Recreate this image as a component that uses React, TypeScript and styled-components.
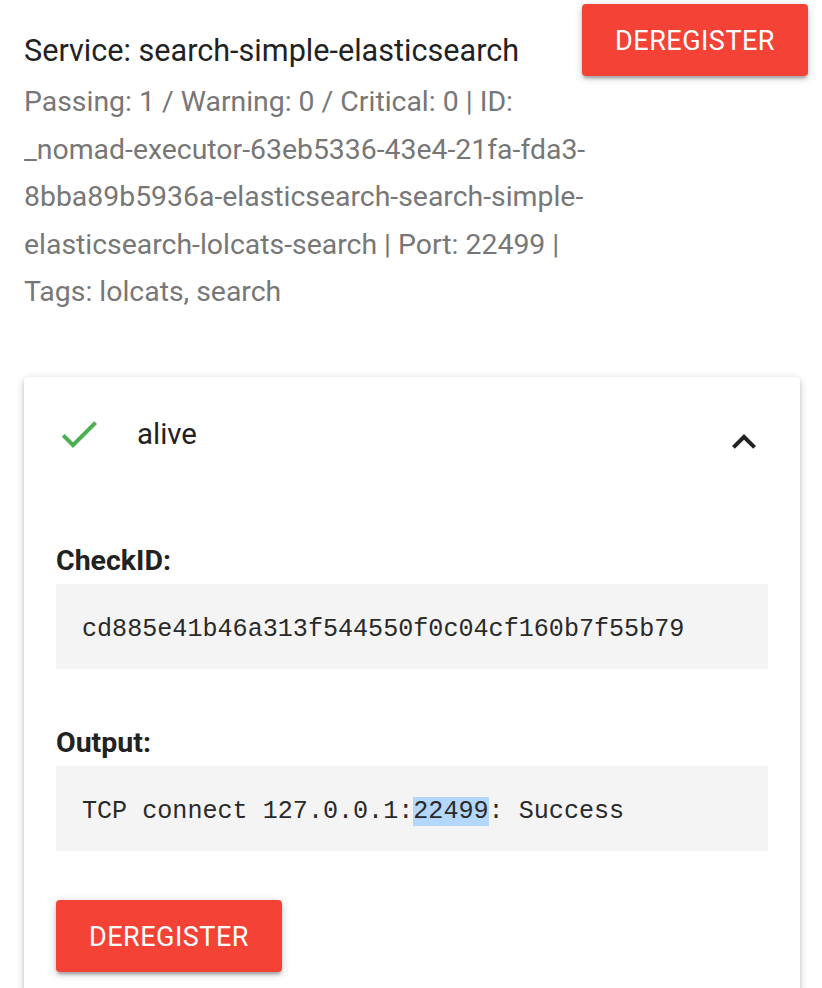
import React from 'react';
import styled, { createGlobalStyle } from 'styled-components';

const GlobalStyle = createGlobalStyle`
  body {
    margin: 0;
    background: #ffffff;
    font-family: Roboto, "Liberation Sans", sans-serif;
    color: rgba(0, 0, 0, 0.87);
  }
`;

const Page = styled.div`
  padding: 4px 14px 0 24px;
`;

const Header = styled.div`
  display: grid;
  grid-template-columns: 1fr auto;
  align-items: start;
`;

const Title = styled.h5`
  margin: 22.5px 0 0 0;
  font-size: 30.6px;
  font-weight: 400;
  line-height: 48px;
  color: #222222;
`;

const Meta = styled.p`
  grid-column: 1 / span 2;
  max-width: 600px;
  margin: 2px 0 0 0;
  font-size: 28.4px;
  line-height: 47.5px;
  color: #777777;
`;

const Button = styled.button`
  height: 72px;
  padding: 2px 33px 0 33px;
  border: none;
  border-radius: 4px;
  background: #f44336;
  color: #ffffff;
  font-family: Roboto, "Liberation Sans", sans-serif;
  font-size: 27px;
  letter-spacing: 0.5px;
  text-transform: uppercase;
  box-shadow: 0 3px 3px 0 rgba(0, 0, 0, 0.14), 0 5px 2px -3px rgba(0, 0, 0, 0.12),
    0 2px 8px 0 rgba(0, 0, 0, 0.2);
  cursor: pointer;
`;

const Card = styled.div`
  margin-top: 61.5px;
  width: 776px;
  padding-bottom: 24px;
  background: #ffffff;
  border-radius: 4px;
  box-shadow: 0 3px 3px 0 rgba(0, 0, 0, 0.14), 0 4px 2px -3px rgba(0, 0, 0, 0.12),
    0 2px 8px 0 rgba(0, 0, 0, 0.2);
`;

const CardHeader = styled.div`
  display: flex;
  align-items: flex-start;
  padding: 33px 32px 0 31px;
`;

const Status = styled.span`
  margin-left: 34px;
  flex: 1;
  font-size: 29.4px;
  line-height: 48px;
  color: #222222;
`;

const Chevron = styled.svg`
  margin-top: 8px;
`;

const CardBody = styled.div`
  padding: 77px 32px 0 32px;
`;

const Label = styled.h6<{ $gap: number }>`
  margin: ${p => p.$gap}px 0 5px 0;
  font-size: 28.5px;
  font-weight: 700;
  line-height: 36px;
  color: #222222;
`;

const Code = styled.pre`
  margin: 0;
  padding: 27px 26px 21px 26px;
  background: #f4f4f4;
  font-family: "Liberation Mono", "DejaVu Sans Mono", monospace;
  font-size: 25.1px;
  line-height: 37px;
  color: #2a2a2a;
`;

const Selected = styled.span`
  background: #b3d7fd;
`;

const Footer = styled.div`
  margin-top: 49px;
`;

const CheckIcon = () => (
  <svg width="48" height="48" viewBox="0 0 24 24">
    <path fill="#4caf50" d="M9 16.17L4.83 12l-1.42 1.41L9 19 21 7l-1.41-1.41z" />
  </svg>
);

const App = () => {
  return (
    <Page>
      <GlobalStyle />
      <Header>
        <Title>Service: search-simple-elasticsearch</Title>
        <Button>Deregister</Button>
        <Meta>
          Passing: 1 / Warning: 0 / Critical: 0 | ID:
          _nomad-executor-63eb5336-43e4-21fa-fda3-8bba89b5936a-elasticsearch-search-simple-elasticsearch-lolcats-search
          | Port: 22499 | Tags: lolcats, search
        </Meta>
      </Header>
      <Card>
        <CardHeader>
          <CheckIcon />
          <Status>alive</Status>
          <Chevron width="48" height="48" viewBox="0 0 24 24">
            <path fill="#222222" d="M12 8l-6 6 1.41 1.41L12 10.83l4.59 4.58L18 14z" />
          </Chevron>
        </CardHeader>
        <CardBody>
          <Label $gap={0}>CheckID:</Label>
          <Code>cd885e41b46a313f544550f0c04cf160b7f55b79</Code>
          <Label $gap={56}>Output:</Label>
          <Code>
            TCP connect 127.0.0.1:<Selected>22499</Selected>: Success
          </Code>
          <Footer>
            <Button>Deregister</Button>
          </Footer>
        </CardBody>
      </Card>
    </Page>
  );
};

export default App;
